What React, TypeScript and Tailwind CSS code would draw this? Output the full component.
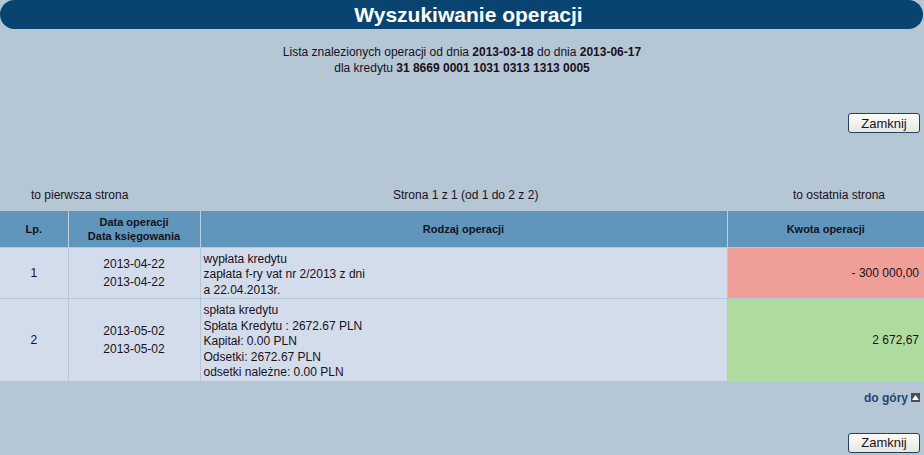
const font = { fontFamily: '"Liberation Sans", Arial, sans-serif' };

function CloseButton() {
  return (
    <button className="h-[20px] w-[72px] rounded-[3px] border border-[#23405e] bg-gradient-to-b from-[#fbfbf8] to-[#e8e8e2] text-[13px] leading-none text-[#1a1020]">
      Zamknij
    </button>
  );
}

interface Row {
  lp: number;
  dates: [string, string];
  lines: string[];
  amount: string;
  tone: string;
  height: string;
}

const rows: Row[] = [
  {
    lp: 1,
    dates: ['2013-04-22', '2013-04-22'],
    lines: ['wypłata kredytu', 'zapłata f-ry vat nr 2/2013 z dni', 'a 22.04.2013r.'],
    amount: '- 300 000,00',
    tone: 'bg-[#f09e98]',
    height: 'h-[51px]',
  },
  {
    lp: 2,
    dates: ['2013-05-02', '2013-05-02'],
    lines: [
      'spłata kredytu',
      'Spłata Kredytu : 2672.67 PLN',
      'Kapitał: 0.00 PLN',
      'Odsetki: 2672.67 PLN',
      'odsetki należne: 0.00 PLN',
    ],
    amount: '2 672,67',
    tone: 'bg-[#b0dca0]',
    height: 'h-[81px]',
  },
];

export default function App() {
  return (
    <div className="min-h-[455px] w-[924px] bg-[#b5c7d4] text-[12px] text-[#1a1020]" style={font}>
      <div className="flex h-[29px] items-center justify-center rounded-full bg-[#08446f] mr-px pl-[14px]">
        <h1 className="text-[21px] font-bold text-white">Wyszukiwanie operacji</h1>
      </div>

      <div className="mt-[15px] text-center leading-[16px]">
        <div>
          Lista znalezionych operacji od dnia <b>2013-03-18</b> do dnia <b>2013-06-17</b>
        </div>
        <div>
          dla kredytu <b>31 8669 0001 1031 0313 1313 0005</b>
        </div>
      </div>

      <div className="mt-[37px] flex justify-end pr-[4px]">
        <CloseButton />
      </div>

      <div className="mt-[55px] flex items-center justify-between pl-[31px] pr-[39px] leading-[14px]">
        <span>to pierwsza strona</span>
        <span className="pl-[10px]">Strona 1 z 1 (od 1 do 2 z 2)</span>
        <span>to ostatnia strona</span>
      </div>

      <table className="mt-[9px] w-full border-collapse">
        <thead>
          <tr className="h-[36px] bg-[#6096bc] text-[11px] font-bold leading-[14px] text-[#14121c]">
            <th className="w-[68px] border-r border-[#bcd0e0] font-bold">Lp.</th>
            <th className="w-[132px] border-r border-[#bcd0e0] font-bold">
              Data operacji
              <br />
              Data księgowania
            </th>
            <th className="border-r border-[#bcd0e0] font-bold">Rodzaj operacji</th>
            <th className="w-[197px] font-bold">Kwota operacji</th>
          </tr>
        </thead>
        <tbody>
          {rows.map((r) => (
            <tr key={r.lp} className={`${r.height} border-t border-[#b6c8d8] bg-[#d2dcea]`}>
              <td className="border-r border-[#b6c8d8] text-center">{r.lp}</td>
              <td className="border-r border-[#b6c8d8] text-center leading-[18px]">
                {r.dates[0]}
                <br />
                {r.dates[1]}
              </td>
              <td className="border-r border-[#b6c8d8] px-[3px] align-top pt-[4px] leading-[15.5px]">
                {r.lines.map((l) => (
                  <div key={l}>{l}</div>
                ))}
              </td>
              <td className={`${r.tone} pr-[5px] text-right`}>{r.amount}</td>
            </tr>
          ))}
        </tbody>
      </table>

      <div className="mt-[8px] flex items-center justify-end gap-[3px] pr-[4px]">
        <span className="font-bold text-[#1c4874]">do góry</span>
        <span className="flex h-[9px] w-[9px] items-center justify-center bg-[#4a4e52]">
          <svg width="7" height="5" viewBox="0 0 7 5">
            <path d="M3.5 0 L7 5 L0 5 Z" fill="#fff" />
          </svg>
        </span>
      </div>

      <div className="mt-[26px] flex justify-end pr-[4px] pb-[3px]">
        <CloseButton />
      </div>
    </div>
  );
}
